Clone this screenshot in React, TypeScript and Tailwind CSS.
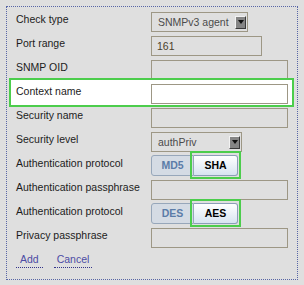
import React from 'react';

const rowBase = 'relative flex h-[24px] items-start';

function Label({ children }: { children: React.ReactNode }) {
  return <div className="flex h-[24px] w-[135px] shrink-0 items-center text-[#1c1c1c]">{children}</div>;
}

function TextBox({ className = '', value = '' }: { className?: string; value?: string }) {
  return (
    <div className={`mt-[5px] flex h-[20px] items-center border border-[#9d9785] pl-[5px] text-[#4a3f2c] ${className}`}>
      {value}
    </div>
  );
}

function SelectBox({ value, className }: { value: string; className: string }) {
  return (
    <div className={`mt-[5px] flex h-[20px] items-center justify-between border border-[#9d9785] pl-[6px] pr-[1px] text-[#4b4b4b] ${className}`}>
      <span>{value}</span>
      <div className="flex h-[13px] w-[11px] items-center justify-center border border-t-[#f2f2f2] border-l-[#f2f2f2] border-r-[#3a3a3a] border-b-[#3a3a3a] bg-[#858585]">
        <svg width="6" height="4" viewBox="0 0 6 4">
          <path d="M0 0h6L3 4z" fill="#111" />
        </svg>
      </div>
    </div>
  );
}

function Toggle({ left, right }: { left: string; right: string }) {
  return (
    <div className="mt-[4px] flex h-[21px] font-bold">
      <div className="flex w-[43px] items-center justify-center rounded-l-[3px] border border-[#97a7ba] bg-[#d4dbe4] text-[#5b7ca8]">
        {left}
      </div>
      <div className="relative flex w-[44px] items-center justify-center rounded-r-[3px] border border-l-0 border-[#8a9fb7] bg-gradient-to-b from-white to-[#d8e4f1] text-black">
        {right}
        <div className="pointer-events-none absolute -bottom-[4px] -left-[4px] -right-[4px] -top-[5px] border-2 border-[#4ccd4c]" />
      </div>
    </div>
  );
}

export default function App() {
  return (
    <div className="h-[285px] w-[304px] bg-[#dfdfdf] pl-[6px] pt-[6px] font-['Liberation_Sans',Arial,sans-serif] text-[10.5px] leading-none">
      <div className="h-[274px] w-[292px] border border-dotted border-[#5866a6] pl-[9px]">
        <div className={rowBase}>
          <Label>Check type</Label>
          <SelectBox value="SNMPv3 agent" className="w-[97px]" />
        </div>
        <div className={rowBase}>
          <Label>Port range</Label>
          <TextBox className="w-[111px]" value="161" />
        </div>
        <div className={rowBase}>
          <Label>SNMP OID</Label>
          <TextBox className="w-[137px]" />
        </div>
        {/* highlighted row */}
        <div className={rowBase}>
          <div className="absolute -bottom-[4px] -left-[7px] -top-[1px] right-[3px] border-2 border-[#4ccd4c] bg-white" />
          <div className="relative flex">
            <Label>Context name</Label>
            <TextBox className="w-[137px] bg-white" />
          </div>
        </div>
        <div className={`${rowBase} mt-0`}>
          <Label>Security name</Label>
          <TextBox className="w-[137px]" />
        </div>
        <div className={rowBase}>
          <Label>Security level</Label>
          <SelectBox value="authPriv" className="w-[91px]" />
        </div>
        <div className={rowBase}>
          <Label>Authentication protocol</Label>
          <Toggle left="MD5" right="SHA" />
        </div>
        <div className={rowBase}>
          <Label>Authentication passphrase</Label>
          <TextBox className="w-[137px]" />
        </div>
        <div className={rowBase}>
          <Label>Authentication protocol</Label>
          <Toggle left="DES" right="AES" />
        </div>
        <div className={rowBase}>
          <Label>Privacy passphrase</Label>
          <TextBox className="w-[137px]" />
        </div>
        <div className="flex h-[24px] items-center gap-[11px] text-[#4c4ca4]">
          <a className="mt-[4px] border-b border-dotted border-[#33338a] px-[4px] pb-[3px]">Add</a>
          <a className="mt-[4px] border-b border-dotted border-[#33338a] px-[3px] pb-[3px]">Cancel</a>
        </div>
      </div>
    </div>
  );
}
